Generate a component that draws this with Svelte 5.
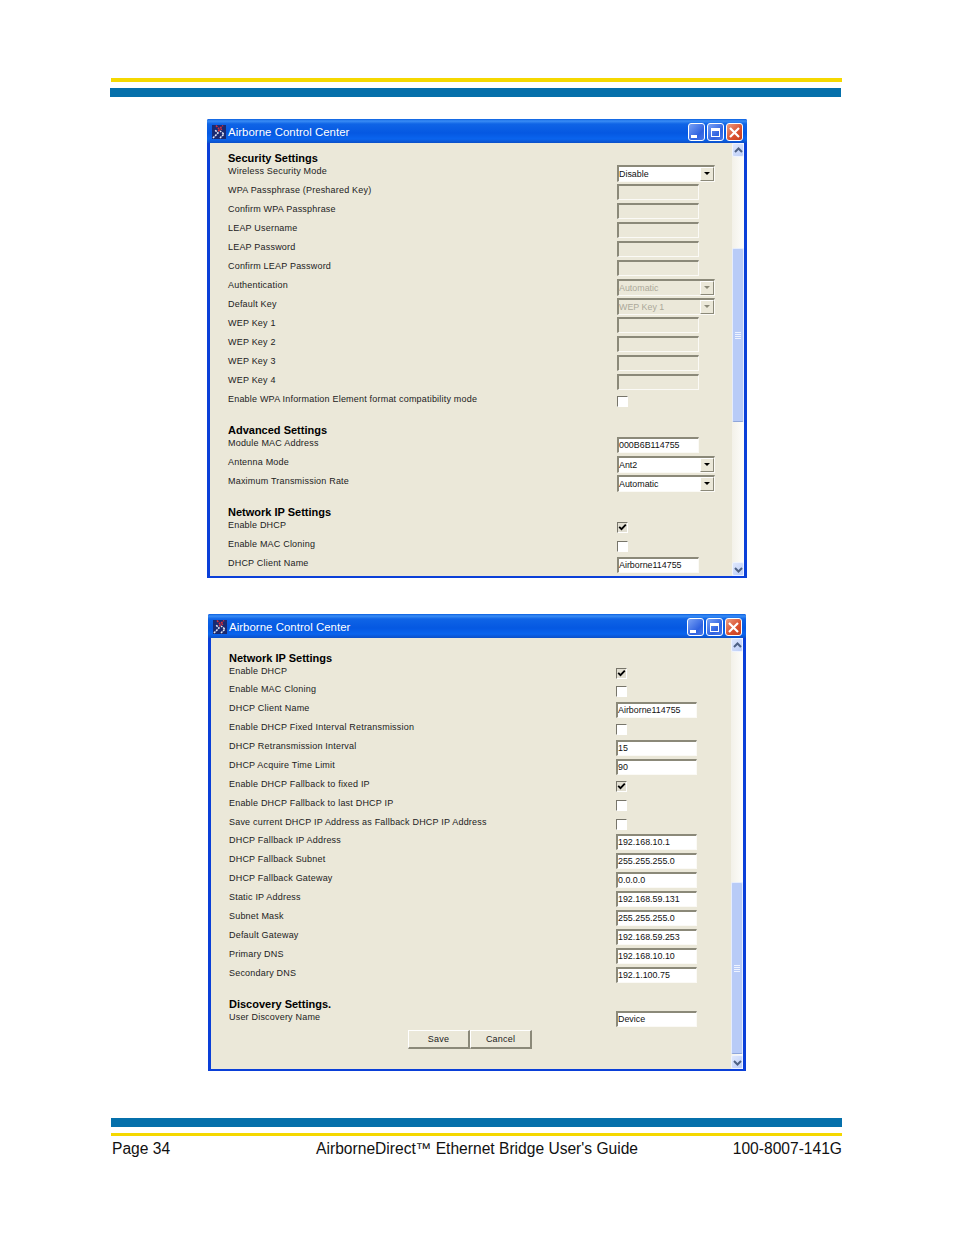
<script>
  const first = [
    { title: 'Security Settings', rows: [
      ['Wireless Security Mode', 'select', 'Disable'],
      ['WPA Passphrase (Preshared Key)', 'off', ''],
      ['Confirm WPA Passphrase', 'off', ''],
      ['LEAP Username', 'off', ''],
      ['LEAP Password', 'off', ''],
      ['Confirm LEAP Password', 'off', ''],
      ['Authentication', 'selectoff', 'Automatic'],
      ['Default Key', 'selectoff', 'WEP Key 1'],
      ['WEP Key 1', 'off', ''],
      ['WEP Key 2', 'off', ''],
      ['WEP Key 3', 'off', ''],
      ['WEP Key 4', 'off', ''],
      ['Enable WPA Information Element format compatibility mode', 'check', false]
    ]},
    { title: 'Advanced Settings', rows: [
      ['Module MAC Address', 'input', '000B6B114755'],
      ['Antenna Mode', 'select', 'Ant2'],
      ['Maximum Transmission Rate', 'select', 'Automatic']
    ]},
    { title: 'Network IP Settings', rows: [
      ['Enable DHCP', 'check', true],
      ['Enable MAC Cloning', 'check', false],
      ['DHCP Client Name', 'input', 'Airborne114755']
    ]}
  ];
  const second = [
    { title: 'Network IP Settings', rows: [
      ['Enable DHCP', 'check', true],
      ['Enable MAC Cloning', 'check', false],
      ['DHCP Client Name', 'input', 'Airborne114755'],
      ['Enable DHCP Fixed Interval Retransmission', 'check', false],
      ['DHCP Retransmission Interval', 'input', '15'],
      ['DHCP Acquire Time Limit', 'input', '90'],
      ['Enable DHCP Fallback to fixed IP', 'check', true],
      ['Enable DHCP Fallback to last DHCP IP', 'check', false],
      ['Save current DHCP IP Address as Fallback DHCP IP Address', 'check', false],
      ['DHCP Fallback IP Address', 'input', '192.168.10.1'],
      ['DHCP Fallback Subnet', 'input', '255.255.255.0'],
      ['DHCP Fallback Gateway', 'input', '0.0.0.0'],
      ['Static IP Address', 'input', '192.168.59.131'],
      ['Subnet Mask', 'input', '255.255.255.0'],
      ['Default Gateway', 'input', '192.168.59.253'],
      ['Primary DNS', 'input', '192.168.10.10'],
      ['Secondary DNS', 'input', '192.1.100.75']
    ]},
    { title: 'Discovery Settings.', rows: [
      ['User Discovery Name', 'input', 'Device']
    ]}
  ];
</script>

{#snippet chrome()}
  <div class="titlebar">
    <svg class="logo" width="14" height="14" viewBox="0 0 14 14">
      <rect width="14" height="14" fill="#1a2a70"/>
      <path d="M1 13 L6 8 L3 5 M8 13 L12 9 L8 6" stroke="#e4e8f6" stroke-width="1.5" stroke-dasharray="2 1" fill="none"/>
      <path d="M4 0.5 L7 4 L11 0.5 M6 6 L10 4" stroke="#d8303c" stroke-width="1.5" stroke-dasharray="2 1" fill="none"/>
    </svg>
    <span class="title">Airborne Control Center</span>
    <span class="wbtn blue"><i class="min"></i></span>
    <span class="wbtn blue"><i class="max"></i></span>
    <span class="wbtn red">
      <svg width="13" height="13" viewBox="0 0 13 13"><path d="M2 2 L11 11 M11 2 L2 11" stroke="#fff" stroke-width="2.2"/></svg>
    </span>
  </div>
{/snippet}

{#snippet scrollbar()}
  <div class="scrollbar">
    <div class="arrow">
      <svg width="9" height="7" viewBox="0 0 9 7"><path d="M1 5 L4.5 1.5 L8 5" stroke="#4d6185" stroke-width="2" fill="none"/></svg>
    </div>
    <div class="track before"></div>
    <div class="thumb"><i></i><i></i><i></i><i></i></div>
    <div class="track after"></div>
    <div class="arrow">
      <svg width="9" height="7" viewBox="0 0 9 7"><path d="M1 2 L4.5 5.5 L8 2" stroke="#4d6185" stroke-width="2" fill="none"/></svg>
    </div>
  </div>
{/snippet}

{#snippet section(s)}
  <section>
    <h2>{s.title}</h2>
    {#each s.rows as [label, type, value]}
      <div class="row">
        <span class="label">{label}</span>
        {#if type === 'select' || type === 'selectoff'}
          <span class="field select" class:disabled={type === 'selectoff'}>
            <span class="val">{value}</span>
            <span class="drop"><b></b></span>
          </span>
        {:else if type === 'check'}
          <span class="check" class:on={value}>
            {#if value}
              <svg width="9" height="9" viewBox="0 0 9 9"><path d="M1.2 3.8 L3.5 6.2 L7.8 1.6" stroke="#000" stroke-width="1.8" fill="none"/></svg>
            {/if}
          </span>
        {:else}
          <span class="field" class:disabled={type === 'off'}><span class="val">{value}</span></span>
        {/if}
      </div>
    {/each}
  </section>
{/snippet}

<div class="page">
  <div class="bar yellow top-y"></div>
  <div class="bar blue-bar top-b"></div>

  <div class="window one">
    {@render chrome()}
    <div class="body">
      <div class="form">
        {#each first as s}{@render section(s)}{/each}
      </div>
      {@render scrollbar()}
    </div>
  </div>

  <div class="window two">
    {@render chrome()}
    <div class="body">
      <div class="form">
        {#each second as s}{@render section(s)}{/each}
        <div class="buttons">
          <span class="btn">Save</span>
          <span class="btn">Cancel</span>
        </div>
      </div>
      {@render scrollbar()}
    </div>
  </div>

  <div class="bar blue-bar bot-b"></div>
  <div class="bar yellow bot-y"></div>
  <footer>
    <span>Page 34</span>
    <span class="mid">AirborneDirect™ Ethernet Bridge User's Guide</span>
    <span class="end">100-8007-141G</span>
  </footer>
</div>

<style>
  :global(body) { margin: 0; background: #fff; }
  .page {
    width: 954px;
    height: 1235px;
    box-sizing: border-box;
    padding-top: 78px;
    overflow: hidden;
    font-family: "Liberation Sans", Arial, sans-serif;
  }
  .bar { width: 731px; }
  .yellow { background: #f5d800; }
  .blue-bar { background: #0570ab; }
  .top-y { height: 4px; margin-left: 111px; }
  .top-b { height: 9px; margin-left: 110px; margin-top: 6px; }
  .bot-b { height: 9px; margin-left: 111px; margin-top: 47px; }
  .bot-y { height: 3px; margin-left: 111px; margin-top: 6px; }
  footer {
    width: 730px;
    margin-left: 112px;
    margin-top: 3px;
    display: flex;
    font-size: 15.6px;
    line-height: 20px;
    color: #111;
  }
  .mid { margin-left: 146px; }
  .end { margin-left: auto; }

  .window {
    box-sizing: border-box;
    display: flex;
    flex-direction: column;
    background: #0a3fd8;
    overflow: hidden;
    border-radius: 2px 2px 0 0;
  }
  .one { width: 540px; height: 459px; margin: 22px 0 0 207px; --row: 19px; --pad: 9px; --lab: 389px; --fw: 82px; --gap: 13px; }
  .two { width: 538px; height: 457px; margin: 36px 0 0 208px; --row: 18.875px; --pad: 13.6px; --lab: 387px; --fw: 81px; --gap: 13.5px; }

  .titlebar {
    box-sizing: border-box;
    height: 24px;
    flex: none;
    display: flex;
    align-items: center;
    padding: 2px 4px 0 5px;
    background: linear-gradient(#0a5fe0 0, #3a8df5 2px, #0f64e6 5px, #0558e2 14px, #0a64ee 20px, #0b4fc8 24px);
  }
  .logo { flex: none; }
  .title {
    flex: 1;
    margin-left: 2px;
    font-size: 11.4px;
    color: #fff;
    letter-spacing: 0.05px;
  }
  .wbtn {
    box-sizing: border-box;
    width: 17px;
    height: 18px;
    margin-left: 2px;
    border: 1px solid #fff;
    border-radius: 3px;
    display: flex;
    align-items: center;
    justify-content: center;
  }
  .wbtn.blue { background: linear-gradient(135deg, #7aa2f5, #2f62e0 65%, #4a78e8); }
  .wbtn.red { background: linear-gradient(135deg, #ec9c80, #d94f2e 60%, #c8401f); }
  .min { width: 6px; height: 3px; background: #fff; margin: 9px 5px 0 0; display: block; }
  .max { box-sizing: border-box; width: 9px; height: 9px; border: 1px solid #fff; border-top-width: 3px; display: block; }

  .body {
    flex: 1;
    min-height: 0;
    display: flex;
    margin: 0 3px 2px 3px;
    background: #ebe8d9;
  }
  .form {
    flex: 1;
    min-width: 0;
    padding: var(--pad) 0 0 18px;
    color: #222;
    font-size: 9px;
  }
  section + section { margin-top: var(--gap); }
  h2 {
    margin: 0;
    font-size: 11px;
    line-height: 12px;
    font-weight: bold;
    color: #000;
  }
  .row {
    height: var(--row);
    display: flex;
    align-items: flex-start;
  }
  .label {
    width: var(--lab);
    flex: none;
    line-height: 14px;
    letter-spacing: 0.2px;
    white-space: nowrap;
  }
  .field {
    box-sizing: border-box;
    width: var(--fw);
    height: 16px;
    margin-top: 1px;
    padding-bottom: 1px;
    background: #fff;
    border-style: solid;
    border-width: 2px 1px 1px 2px;
    border-color: #8b8979 #fbfaf6 #fbfaf6 #8b8979;
    display: flex;
    align-items: center;
    font-size: 8.9px;
    line-height: 12px;
    color: #111;
    white-space: nowrap;
  }
  .val { flex: 1; }
  .field.disabled { background: #ebe8d9; color: #aca899; }
  .select { width: 98px; height: 17px; }
  .drop {
    box-sizing: border-box;
    flex: none;
    width: 14px;
    height: 14px;
    background: #ebe8d9;
    border-style: solid;
    border-width: 1px;
    border-color: #fff #8b8979 #8b8979 #fff;
    display: flex;
    align-items: center;
    justify-content: center;
  }
  .drop b {
    width: 0;
    height: 0;
    border: 3px solid transparent;
    border-top: 3px solid #000;
    border-bottom: 0;
  }
  .disabled .drop b { border-top-color: #8b8979; }
  .check {
    box-sizing: border-box;
    width: 11px;
    height: 11px;
    margin-top: 4px;
    background: #fff;
    border-style: solid;
    border-width: 1px;
    border-color: #77756a #fff #fff #77756a;
    display: flex;
    align-items: center;
    justify-content: center;
  }
  .check.on { background: #e2dfd2; }

  .buttons {
    display: flex;
    margin: 1px 0 0 179px;
  }
  .btn {
    box-sizing: border-box;
    width: 62px;
    height: 19px;
    display: flex;
    align-items: center;
    justify-content: center;
    background: #ebe8d9;
    border-style: solid;
    border-width: 1px 2px 2px 1px;
    border-color: #fff #8b8979 #8b8979 #fff;
    letter-spacing: 0.2px;
    color: #222;
  }

  .scrollbar {
    width: 12px;
    flex: none;
    display: flex;
    flex-direction: column;
    background: linear-gradient(90deg, #f3f1e9, #fdfdfb);
  }
  .arrow {
    box-sizing: border-box;
    flex: none;
    height: 14px;
    display: flex;
    align-items: center;
    justify-content: center;
    background: linear-gradient(135deg, #dfe8fd, #bccdf7);
    border: 1px solid #eef3ff;
    border-radius: 2px;
  }
  .track { flex: none; }
  .one .before { height: 91px; }
  .two .before { height: 230px; }
  .one .after { height: 140px; }
  .two .after { height: 1px; }
  .thumb {
    box-sizing: border-box;
    flex: none;
    height: 174px;
    background: #b8cbf7;
    border: 1px solid #e6edfd;
    border-bottom-color: #8fa6da;
    border-radius: 2px;
    display: flex;
    flex-direction: column;
    align-items: center;
    justify-content: center;
    gap: 1px;
  }
  .two .thumb { height: 172px; }
  .thumb i {
    width: 6px;
    height: 1px;
    background: #eef3ff;
    display: block;
  }
</style>
